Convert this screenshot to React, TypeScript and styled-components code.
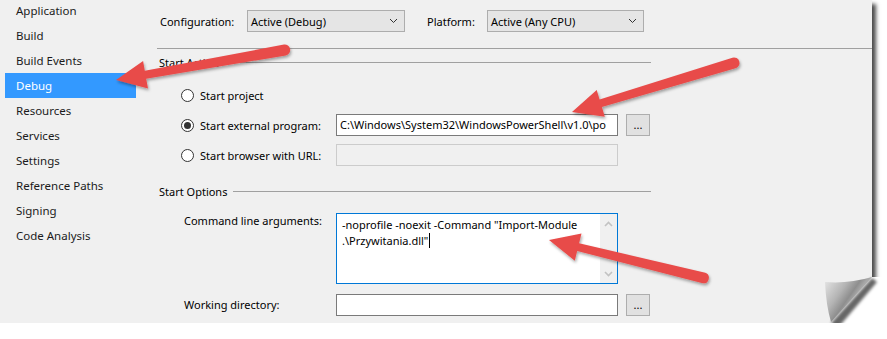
import React from "react";
import styled, { createGlobalStyle } from "styled-components";

const GlobalStyle = createGlobalStyle`
  html, body {
    margin: 0;
    background: #ffffff;
  }
  body {
    font-family: "Noto Sans", "Open Sans", sans-serif;
    font-size: 11px;
    color: #000;
  }
`;

const Panel = styled.div`
  position: relative;
  display: flex;
  width: 872px;
  height: 323px;
  background: #f0f0f0;
  box-shadow: 4px 4px 4px rgba(0, 0, 0, 0.7);
`;

const Nav = styled.ul`
  list-style: none;
  margin: -2px 0 0;
  padding: 0 0 0 5px;
  width: 152px;
  flex-shrink: 0;
`;

const NavItem = styled.li<{ $active?: boolean }>`
  width: 131px;
  height: 25px;
  line-height: 25px;
  padding-left: 11px;
  box-sizing: border-box;
  font-size: 11.5px;
  color: ${(p) => (p.$active ? "#ffffff" : "#1b1b1b")};
  background: ${(p) => (p.$active ? "#3399ff" : "transparent")};
  white-space: nowrap;
`;

const Content = styled.div`
  flex: 1;
  display: flex;
  flex-direction: column;
`;

const TopRow = styled.div`
  display: flex;
  align-items: center;
  height: 22px;
  margin-top: 10px;
  padding-left: 3px;
`;

const TopLabel = styled.span<{ $width: number; $gap?: number }>`
  width: ${(p) => p.$width}px;
  margin-left: ${(p) => p.$gap ?? 0}px;
  white-space: nowrap;
`;

const Select = styled.div<{ $width: number }>`
  width: ${(p) => p.$width}px;
  height: 22px;
  box-sizing: border-box;
  border: 1px solid #adadad;
  background: #e5e5e5;
  display: flex;
  align-items: center;
  justify-content: space-between;
  padding: 0 6px 0 3px;
  white-space: nowrap;
`;

const Rule = styled.div`
  height: 1px;
  background: #a0a0a0;
  margin-top: 16px;
`;

const GroupHeader = styled.div<{ $top: number }>`
  display: flex;
  align-items: center;
  gap: 6px;
  width: 494px;
  height: 14px;
  margin-top: ${(p) => p.$top}px;
  padding-left: 2px;
  box-sizing: border-box;
  white-space: nowrap;

  &::after {
    content: "";
    flex: 1;
    height: 1px;
    background: #a0a0a0;
  }
`;

const FormGrid = styled.div<{ $indent: number; $label: number; $top: number; $gap: number }>`
  display: grid;
  grid-template-columns: ${(p) => p.$label}px 282px 24px;
  column-gap: 8px;
  row-gap: ${(p) => p.$gap}px;
  padding-left: ${(p) => p.$indent}px;
  margin-top: ${(p) => p.$top}px;
  align-items: center;
`;

const RadioLabel = styled.label`
  display: flex;
  align-items: center;
  gap: 6px;
  height: 22px;
  white-space: nowrap;
`;

const Radio = styled.span<{ $checked?: boolean }>`
  position: relative;
  width: 13px;
  height: 13px;
  box-sizing: border-box;
  border: 1px solid #333333;
  border-radius: 50%;
  background: #ffffff;

  &::after {
    content: "";
    display: ${(p) => (p.$checked ? "block" : "none")};
    position: absolute;
    left: 2px;
    top: 2px;
    width: 7px;
    height: 7px;
    border-radius: 50%;
    background: #333333;
  }
`;

const FieldLabel = styled.span<{ $start?: boolean }>`
  white-space: nowrap;
  align-self: ${(p) => (p.$start ? "start" : "center")};
  line-height: 16px;
`;

const TextField = styled.div<{ $disabled?: boolean }>`
  grid-column: 2;
  height: 22px;
  box-sizing: border-box;
  border: 1px solid ${(p) => (p.$disabled ? "#cccccc" : "#7a7a7a")};
  background: ${(p) => (p.$disabled ? "#f0f0f0" : "#ffffff")};
  padding: 0 3px;
  line-height: 20px;
  white-space: nowrap;
  overflow: hidden;
`;

const BrowseButton = styled.div`
  height: 22px;
  box-sizing: border-box;
  border: 1px solid #adadad;
  background: #e1e1e1;
  text-align: center;
  line-height: 20px;
`;

const ArgsBox = styled.div`
  grid-column: 2;
  height: 71px;
  box-sizing: border-box;
  border: 1px solid #0078d7;
  background: #ffffff;
  display: flex;
`;

const ArgsText = styled.div`
  flex: 1;
  padding: 3px 5px 2px;
  line-height: 16px;
  white-space: nowrap;
  overflow: hidden;
`;

const Caret = styled.span`
  display: inline-block;
  width: 1px;
  height: 15px;
  background: #000;
  vertical-align: -3px;
  margin-left: 1px;
`;

const ScrollTrack = styled.div`
  width: 17px;
  background: #f0f0f0;
  display: flex;
  flex-direction: column;
  justify-content: space-between;
  align-items: center;
  padding: 7px 0 6px;
  box-sizing: border-box;
`;

const Overlay = styled.svg`
  position: absolute;
  left: 0;
  top: 0;
  pointer-events: none;
  overflow: visible;
`;

const Curl = styled.svg`
  position: absolute;
  right: -15px;
  bottom: -16px;
  pointer-events: none;
`;

const Chevron = ({ up, color = "#333" }: { up?: boolean; color?: string }) => (
  <svg width="9" height="6" viewBox="0 0 9 6">
    <polyline
      points={up ? "1,5 4.5,1.5 8,5" : "1,1 4.5,4.5 8,1"}
      fill="none"
      stroke={color}
      strokeWidth={up || color !== "#333" ? 1.6 : 1}
    />
  </svg>
);

const navItems = [
  "Application",
  "Build",
  "Build Events",
  "Debug",
  "Resources",
  "Services",
  "Settings",
  "Reference Paths",
  "Signing",
  "Code Analysis",
];

// tail x, tail y, tip x, tip y
const arrows: [number, number, number, number][] = [
  [285, 50, 116, 80],
  [734, 63, 572, 112],
  [704, 278, 549, 240],
];

function arrowShape(tx: number, ty: number, px: number, py: number) {
  const L = 30, H = 14, wt = 11, wh = 8;
  const len = Math.hypot(px - tx, py - ty);
  const ux = (px - tx) / len, uy = (py - ty) / len;
  const nx = -uy, ny = ux;
  const bx = px - ux * L, by = py - uy * L;
  const pt = (x: number, y: number) => `${x.toFixed(1)},${y.toFixed(1)}`;
  return [
    "M", pt(tx + (nx * wt) / 2, ty + (ny * wt) / 2),
    "L", pt(bx + (nx * wh) / 2, by + (ny * wh) / 2),
    "L", pt(bx + nx * H, by + ny * H),
    "L", pt(px, py),
    "L", pt(bx - nx * H, by - ny * H),
    "L", pt(bx - (nx * wh) / 2, by - (ny * wh) / 2),
    "L", pt(tx - (nx * wt) / 2, ty - (ny * wt) / 2),
    "A", `${wt / 2} ${wt / 2} 0 0 0`, pt(tx + (nx * wt) / 2, ty + (ny * wt) / 2),
    "Z",
  ].join(" ");
}

export default function App() {
  return (
    <>
      <GlobalStyle />
      <Panel>
        <Nav>
          {navItems.map((item) => (
            <NavItem key={item} $active={item === "Debug"}>
              {item}
            </NavItem>
          ))}
        </Nav>
        <Content>
          <TopRow>
            <TopLabel $width={87}>Configuration:</TopLabel>
            <Select $width={158}>
              <span>Active (Debug)</span>
              <Chevron />
            </Select>
            <TopLabel $width={60} $gap={22}>Platform:</TopLabel>
            <Select $width={157}>
              <span>Active (Any CPU)</span>
              <Chevron />
            </Select>
          </TopRow>
          <Rule />
          <GroupHeader $top={6}>Start Action</GroupHeader>
          <FormGrid $indent={24} $label={147} $top={15} $gap={8}>
            <RadioLabel>
              <Radio />
              Start project
            </RadioLabel>
            <span />
            <span />
            <RadioLabel>
              <Radio $checked />
              Start external program:
            </RadioLabel>
            <TextField>C:\Windows\System32\WindowsPowerShell\v1.0\po</TextField>
            <BrowseButton>...</BrowseButton>
            <RadioLabel>
              <Radio />
              Start browser with URL:
            </RadioLabel>
            <TextField $disabled />
          </FormGrid>
          <GroupHeader $top={18}>Start Options</GroupHeader>
          <FormGrid $indent={27} $label={144} $top={15} $gap={10}>
            <FieldLabel $start>Command line arguments:</FieldLabel>
            <ArgsBox>
              <ArgsText>
                -noprofile -noexit -Command "Import-Module
                <br />
                .\Przywitania.dll"
                <Caret />
              </ArgsText>
              <ScrollTrack>
                <Chevron up color="#c2c2c2" />
                <Chevron color="#c2c2c2" />
              </ScrollTrack>
            </ArgsBox>
            <span />
            <FieldLabel>Working directory:</FieldLabel>
            <TextField />
            <BrowseButton>...</BrowseButton>
          </FormGrid>
        </Content>

        <Curl width="67" height="66" viewBox="0 0 67 66">
          <defs>
            <filter id="cblur" x="-50%" y="-50%" width="200%" height="200%">
              <feGaussianBlur stdDeviation="1.6" />
            </filter>
            <linearGradient id="cgrad" x1="5" y1="9" x2="32" y2="28" gradientUnits="userSpaceOnUse">
              <stop offset="0" stopColor="#e2e2e2" />
              <stop offset="0.55" stopColor="#b4b4b4" />
              <stop offset="0.85" stopColor="#8e8e8e" />
              <stop offset="1" stopColor="#a8a8a8" />
            </linearGradient>
          </defs>
          <polygon points="52,4 67,4 67,66 8,66 11,50" fill="#ffffff" />
          <polygon points="52,5 57,9 17,56 11,50" fill="rgba(0,0,0,0.6)" filter="url(#cblur)" />
          <path d="M5,9 Q28,11 52,4 L11,49 Q6,32 5,9 Z" fill="url(#cgrad)" />
        </Curl>

        <Overlay width="887" height="339" viewBox="0 0 887 339">
          <defs>
            <filter id="ashadow" x="-10%" y="-30%" width="120%" height="160%">
              <feDropShadow dx="1" dy="2" stdDeviation="1.5" floodColor="#000" floodOpacity="0.35" />
            </filter>
          </defs>
          {arrows.map(([tx, ty, px, py], i) => (
            <path key={i} d={arrowShape(tx, ty, px, py)} fill="#e84c4a" filter="url(#ashadow)" />
          ))}
        </Overlay>
      </Panel>
    </>
  );
}
